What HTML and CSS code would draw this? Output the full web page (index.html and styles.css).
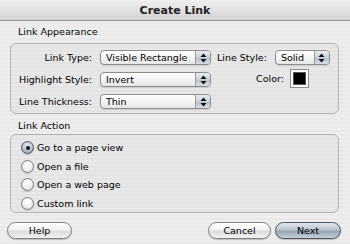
FILE: index.html
```html
<!DOCTYPE html>
<html>
<head>
<meta charset="utf-8">
<link rel="stylesheet" href="styles.css">
</head>
<body>
<div class="window">
  <div class="titlebar">Create Link</div>
  <div class="content">
    <div class="section-label">Link Appearance</div>
    <div class="group appearance">
      <div class="left-grid">
        <span class="lbl">Link Type:</span>
        <div class="popup wide"><span class="ptext">Visible Rectangle</span><span class="stepper"><svg width="7" height="10" viewBox="0 0 7 10"><path d="M3.5 0.5 L6.5 4 L0.5 4 Z M0.5 6 L6.5 6 L3.5 9.5 Z" fill="#111"/></svg></span></div>
        <span class="lbl">Highlight Style:</span>
        <div class="popup wide"><span class="ptext">Invert</span><span class="stepper"><svg width="7" height="10" viewBox="0 0 7 10"><path d="M3.5 0.5 L6.5 4 L0.5 4 Z M0.5 6 L6.5 6 L3.5 9.5 Z" fill="#111"/></svg></span></div>
        <span class="lbl">Line Thickness:</span>
        <div class="popup wide"><span class="ptext">Thin</span><span class="stepper"><svg width="7" height="10" viewBox="0 0 7 10"><path d="M3.5 0.5 L6.5 4 L0.5 4 Z M0.5 6 L6.5 6 L3.5 9.5 Z" fill="#111"/></svg></span></div>
      </div>
      <div class="right-col">
        <div class="rrow">
          <span class="lbl">Line Style:</span>
          <div class="popup narrow"><span class="ptext">Solid</span><span class="stepper"><svg width="7" height="10" viewBox="0 0 7 10"><path d="M3.5 0.5 L6.5 4 L0.5 4 Z M0.5 6 L6.5 6 L3.5 9.5 Z" fill="#111"/></svg></span></div>
        </div>
        <div class="rrow color-row">
          <span class="lbl">Color:</span>
          <span class="swatch"><span class="swatch-inner"></span></span>
        </div>
      </div>
    </div>
    <div class="section-label second">Link Action</div>
    <div class="group action">
      <label class="radio"><span class="dot on"></span>Go to a page view</label>
      <label class="radio"><span class="dot"></span>Open a file</label>
      <label class="radio"><span class="dot"></span>Open a web page</label>
      <label class="radio"><span class="dot"></span>Custom link</label>
    </div>
    <div class="buttons">
      <span class="btn help">Help</span>
      <span class="spacer"></span>
      <span class="btn cancel">Cancel</span>
      <span class="btn next">Next</span>
    </div>
  </div>
</div>
</body>
</html>
```
FILE: styles.css
```css
html, body {
  margin: 0;
  padding: 0;
}
body {
  font-family: "DejaVu Sans", "Liberation Sans", sans-serif;
  font-size: 9.5px;
  color: #000;
}
.window {
  width: 350px;
  height: 244px;
  overflow: hidden;
  background: repeating-linear-gradient(to bottom, #eeeeee 0px, #eeeeee 2px, #e9e9e9 2px, #e9e9e9 4px);
}
.titlebar {
  height: 21px;
  box-sizing: border-box;
  border-bottom: 1px solid #8f8f8f;
  background: linear-gradient(to bottom, #efefef 0%, #e2e2e2 50%, #d2d2d2 100%);
  font-weight: bold;
  font-size: 11px;
  line-height: 21px;
  text-align: center;
  color: #222;
}
.content {
  padding: 4px 11px 0 10px;
}
.section-label {
  padding-left: 8px;
  height: 14px;
  line-height: 14px;
  margin-bottom: 4px;
}
.section-label.second {
  margin-top: 5px;
  margin-bottom: 1px;
}
.group {
  border: 1px solid #b3b3b3;
  border-radius: 6px;
  background: rgba(0, 0, 0, 0.025);
  box-sizing: border-box;
}
.appearance {
  height: 71px;
  display: flex;
  padding-top: 6px;
}
.left-grid {
  display: grid;
  grid-template-columns: 81px 111px;
  column-gap: 8px;
  row-gap: 7px;
  align-items: center;
  align-content: start;
}
.lbl {
  text-align: right;
  white-space: nowrap;
}
.popup {
  height: 15px;
  box-sizing: border-box;
  border: 1px solid #8c8c8c;
  border-radius: 4px;
  background: linear-gradient(to bottom, #ffffff 0%, #f4f4f4 50%, #e6e6e6 100%);
  display: flex;
  align-items: stretch;
  box-shadow: 0 1px 1px rgba(0,0,0,0.12);
}
.popup .ptext {
  flex: 1;
  padding-left: 5px;
  line-height: 13px;
  white-space: nowrap;
  overflow: hidden;
}
.stepper {
  width: 14px;
  border-left: 1px solid #9a9a9a;
  border-radius: 0 3px 3px 0;
  background: linear-gradient(to bottom, #e9edf2 0%, #c9d0d9 50%, #b3bcc7 51%, #d8dee6 100%);
  display: flex;
  align-items: center;
  justify-content: center;
}
.popup.wide {
  width: 111px;
}
.popup.narrow {
  width: 55px;
}
.right-col {
  display: flex;
  flex-direction: column;
  margin-left: 6px;
}
.rrow {
  display: flex;
  align-items: center;
  gap: 8px;
}
.color-row {
  justify-content: flex-end;
  gap: 6px;
  padding-right: 21px;
  margin-top: 4px;
}
.swatch {
  width: 19px;
  height: 19px;
  box-sizing: border-box;
  border: 1px solid #8a8a8a;
  background: #fafafa;
  display: flex;
  align-items: center;
  justify-content: center;
  box-shadow: inset 0 0 0 1px #ffffff;
}
.swatch-inner {
  width: 11px;
  height: 11px;
  background: #000;
  border: 1px solid #555;
}
.action {
  height: 79px;
  padding-top: 6px;
  padding-left: 10px;
  display: flex;
  flex-direction: column;
  gap: 5.5px;
}
.radio {
  display: flex;
  align-items: center;
  height: 13px;
  gap: 3px;
}
.dot {
  width: 13px;
  height: 13px;
  box-sizing: border-box;
  border-radius: 50%;
  border: 1px solid #7e7e7e;
  background: radial-gradient(circle at 50% 35%, #ffffff 0%, #f2f2f2 45%, #d6d6d6 100%);
  box-shadow: 0 1px 1px rgba(0,0,0,0.15);
  display: flex;
  align-items: center;
  justify-content: center;
}
.dot.on {
  border-color: #4f5a66;
  background: radial-gradient(circle at 50% 35%, #e7edf4 0%, #b5c0cc 55%, #8795a5 100%);
}
.dot.on::after {
  content: "";
  width: 4px;
  height: 4px;
  border-radius: 50%;
  background: #111;
}
.buttons {
  display: flex;
  margin-top: 9px;
  margin-left: -3px;
  margin-right: -2px;
  gap: 4px;
}
.spacer {
  flex: 1;
}
.btn {
  height: 17px;
  box-sizing: border-box;
  border: 1px solid #808080;
  border-radius: 9px;
  background: linear-gradient(to bottom, #ffffff 0%, #f3f3f3 45%, #dcdcdc 55%, #f2f2f2 100%);
  text-align: center;
  line-height: 15px;
  box-shadow: 0 1px 1px rgba(0,0,0,0.2);
}
.help {
  width: 65px;
}
.cancel {
  width: 63px;
}
.next {
  width: 66px;
  border-color: #4a5461;
  background: linear-gradient(to bottom, #e2e8ef 0%, #b9c3ce 45%, #97a4b3 55%, #c6d0db 100%);
  color: #000;
}
```
